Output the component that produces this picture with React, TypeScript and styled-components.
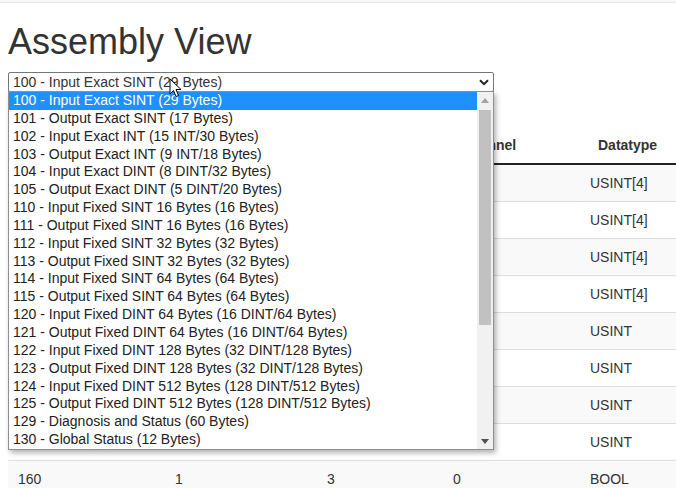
import { createGlobalStyle } from 'styled-components';
import styled from 'styled-components';

const GlobalStyle = createGlobalStyle`
  html, body {
    margin: 0;
    padding: 0;
    background: #fff;
    overflow: hidden;
  }
  body {
    font-family: "Liberation Sans", Arial, sans-serif;
    font-size: 14px;
    color: #333;
  }
  * { box-sizing: border-box; }
`;

const TopBar = styled.div`
  height: 3px;
  background: #f8f8f8;
  border-bottom: 1px solid #e7e7e7;
`;

const Page = styled.div`
  padding: 0 8px;
`;

const Title = styled.h1`
  margin: 19px 0 10px;
  font-size: 36px;
  line-height: 40px;
  font-weight: 400;
  color: #333;
`;

const SelectWrap = styled.div`
  position: relative;
  width: 486px;
  z-index: 5;
`;

const SelectBox = styled.div`
  height: 20px;
  border: 1px solid #767676;
  border-radius: 2px;
  padding: 0 4px;
  display: flex;
  align-items: center;
  justify-content: space-between;
  font-size: 14px;
  color: #333;
  background: #fff;
`;

const Dropdown = styled.div`
  position: absolute;
  top: 19px;
  left: 0;
  width: 486px;
  height: 359px;
  border: 1px solid #8f8f8f;
  background: #fff;
  box-shadow: 2px 3px 5px rgba(0, 0, 0, 0.3);
  display: flex;
`;

const OptionList = styled.div`
  flex: 1;
  overflow: hidden;
`;

const Option = styled.div<{ $active?: boolean }>`
  height: 17.85px;
  line-height: 17.85px;
  padding-left: 4px;
  white-space: nowrap;
  font-size: 14px;
  color: ${(p) => (p.$active ? '#fff' : '#222')};
  background: ${(p) => (p.$active ? '#1e90ff' : 'transparent')};
`;

const ScrollTrack = styled.div`
  width: 16px;
  background: #f1f1f1;
  display: flex;
  flex-direction: column;
  align-items: center;
`;

const ScrollArrow = styled.div<{ $down?: boolean }>`
  height: 16px;
  width: 100%;
  display: flex;
  align-items: center;
  justify-content: center;
  margin-top: ${(p) => (p.$down ? 'auto' : '0')};
`;

const ScrollThumb = styled.div`
  width: 12px;
  height: 215px;
  margin-top: 2px;
  background: #c1c1c1;
`;

const Cursor = styled.svg`
  position: absolute;
  left: 161px;
  top: 6px;
  z-index: 10;
`;

const Table = styled.table`
  margin-top: 35px;
  width: 720px;
  border-collapse: collapse;
  table-layout: fixed;
`;

const Th = styled.th<{ $w: number }>`
  width: ${(p) => p.$w}px;
  text-align: left;
  font-weight: 700;
  padding: 8px 8px 8px 18px;
  line-height: 20px;
  border-bottom: 2px solid #222;
  color: #333;
`;

const Row = styled.tr<{ $striped: boolean }>`
  background: ${(p) => (p.$striped ? '#f9f9f9' : '#fff')};
`;

const Td = styled.td`
  padding: 8px 10px;
  line-height: 20px;
  border-top: 1px solid #ddd;
  color: #333;
  white-space: nowrap;
`;

const options = [
  '100 - Input Exact SINT (29 Bytes)',
  '101 - Output Exact SINT (17 Bytes)',
  '102 - Input Exact INT (15 INT/30 Bytes)',
  '103 - Output Exact INT (9 INT/18 Bytes)',
  '104 - Input Exact DINT (8 DINT/32 Bytes)',
  '105 - Output Exact DINT (5 DINT/20 Bytes)',
  '110 - Input Fixed SINT 16 Bytes (16 Bytes)',
  '111 - Output Fixed SINT 16 Bytes (16 Bytes)',
  '112 - Input Fixed SINT 32 Bytes (32 Bytes)',
  '113 - Output Fixed SINT 32 Bytes (32 Bytes)',
  '114 - Input Fixed SINT 64 Bytes (64 Bytes)',
  '115 - Output Fixed SINT 64 Bytes (64 Bytes)',
  '120 - Input Fixed DINT 64 Bytes (16 DINT/64 Bytes)',
  '121 - Output Fixed DINT 64 Bytes (16 DINT/64 Bytes)',
  '122 - Input Fixed DINT 128 Bytes (32 DINT/128 Bytes)',
  '123 - Output Fixed DINT 128 Bytes (32 DINT/128 Bytes)',
  '124 - Input Fixed DINT 512 Bytes (128 DINT/512 Bytes)',
  '125 - Output Fixed DINT 512 Bytes (128 DINT/512 Bytes)',
  '129 - Diagnosis and Status (60 Bytes)',
  '130 - Global Status (12 Bytes)',
];

const columns = [
  { name: 'Instance', w: 157 },
  { name: 'Slot', w: 152 },
  { name: 'Module', w: 126 },
  { name: 'Channel', w: 137 },
  { name: 'Datatype', w: 148 },
];

const rows = [
  ['100', '1', '0', '0', 'USINT[4]'],
  ['101', '1', '1', '0', 'USINT[4]'],
  ['110', '1', '2', '0', 'USINT[4]'],
  ['111', '1', '3', '0', 'USINT[4]'],
  ['120', '1', '0', '1', 'USINT'],
  ['121', '1', '1', '1', 'USINT'],
  ['130', '1', '2', '1', 'USINT'],
  ['150', '1', '3', '1', 'USINT'],
  ['160', '1', '3', '0', 'BOOL'],
];

export default function App() {
  return (
    <>
      <GlobalStyle />
      <TopBar />
      <Page>
        <Title>Assembly View</Title>
        <SelectWrap>
          <SelectBox>
            <span>{options[0]}</span>
            <svg width="10" height="7" viewBox="0 0 10 7">
              <path d="M1 1.2 L5 5.2 L9 1.2" fill="none" stroke="#222" strokeWidth="2" />
            </svg>
          </SelectBox>
          <Dropdown>
            <OptionList>
              {options.map((o, i) => (
                <Option key={o} $active={i === 0}>
                  {o}
                </Option>
              ))}
            </OptionList>
            <ScrollTrack>
              <ScrollArrow>
                <svg width="8" height="5" viewBox="0 0 8 5">
                  <path d="M0 5 L4 0 L8 5 Z" fill="#a3a3a3" />
                </svg>
              </ScrollArrow>
              <ScrollThumb />
              <ScrollArrow $down>
                <svg width="8" height="5" viewBox="0 0 8 5">
                  <path d="M0 0 L8 0 L4 5 Z" fill="#505050" />
                </svg>
              </ScrollArrow>
            </ScrollTrack>
          </Dropdown>
          <Cursor width="13" height="20" viewBox="0 0 13 20">
            <path
              d="M1 1 L1 16 L4.5 12.5 L7 18.5 L9.5 17.5 L7 11.5 L12 11.5 Z"
              fill="#fff"
              stroke="#000"
              strokeWidth="1"
              strokeLinejoin="round"
            />
          </Cursor>
        </SelectWrap>
        <Table>
          <thead>
            <tr>
              {columns.map((c) => (
                <Th key={c.name} $w={c.w}>
                  {c.name}
                </Th>
              ))}
            </tr>
          </thead>
          <tbody>
            {rows.map((r, i) => (
              <Row key={i} $striped={i % 2 === 0}>
                {r.map((v, j) => (
                  <Td key={j}>{v}</Td>
                ))}
              </Row>
            ))}
          </tbody>
        </Table>
      </Page>
    </>
  );
}
